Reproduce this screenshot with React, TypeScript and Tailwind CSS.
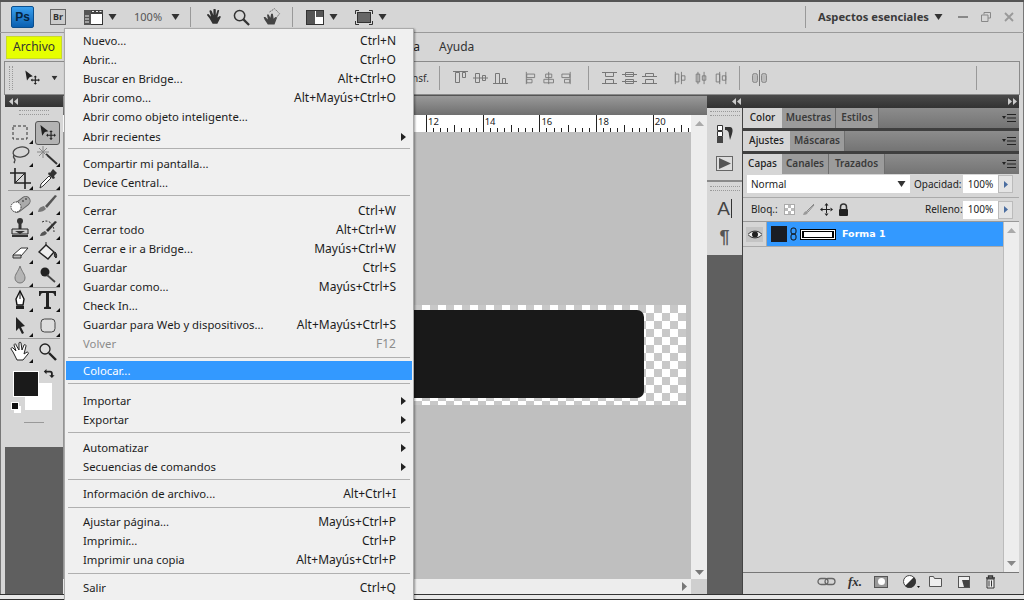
import React from "react";

type Item = { l?: string; s?: string; arrow?: boolean; off?: boolean; on?: boolean; sep?: string; top?: boolean };

const menu: Item[] = [
  { l: "Nuevo...", s: "Ctrl+N" },
  { l: "Abrir...", s: "Ctrl+O" },
  { l: "Buscar en Bridge...", s: "Alt+Ctrl+O" },
  { l: "Abrir como...", s: "Alt+Mayús+Ctrl+O" },
  { l: "Abrir como objeto inteligente..." },
  { l: "Abrir recientes", arrow: true, top: true },
  { sep: "h-[8px] pt-[2px]" },
  { l: "Compartir mi pantalla..." },
  { l: "Device Central..." },
  { sep: "h-[9px] pt-[3px]" },
  { l: "Cerrar", s: "Ctrl+W" },
  { l: "Cerrar todo", s: "Alt+Ctrl+W" },
  { l: "Cerrar e ir a Bridge...", s: "Mayús+Ctrl+W" },
  { l: "Guardar", s: "Ctrl+S" },
  { l: "Guardar como...", s: "Mayús+Ctrl+S" },
  { l: "Check In..." },
  { l: "Guardar para Web y dispositivos...", s: "Alt+Mayús+Ctrl+S" },
  { l: "Volver", s: "F12", off: true },
  { sep: "h-[8px] pt-[4px]" },
  { l: "Colocar...", on: true },
  { sep: "h-[11px] pt-[3px]" },
  { l: "Importar", arrow: true },
  { l: "Exportar", arrow: true },
  { sep: "h-[9px] pt-[3px]" },
  { l: "Automatizar", arrow: true },
  { l: "Secuencias de comandos", arrow: true },
  { sep: "h-[8px] pt-[3px]" },
  { l: "Información de archivo...", s: "Alt+Ctrl+I" },
  { sep: "h-[9px] pt-[4px]" },
  { l: "Ajustar página...", s: "Mayús+Ctrl+P" },
  { l: "Imprimir...", s: "Ctrl+P" },
  { l: "Imprimir una copia", s: "Alt+Mayús+Ctrl+P" },
  { sep: "h-[9px] pt-[4px]" },
  { l: "Salir", s: "Ctrl+Q" },
];

const Caret = ({ c = "" }: { c?: string }) => (
  <svg width="9" height="6" viewBox="0 0 9 6" className={c}>
    <path d="M.5 0h8L4.500 6z" fill="#333" />
  </svg>
);

const Tool = ({ children, corner = true }: { children: React.ReactNode; corner?: boolean }) => (
  <svg width="26" height="24" viewBox="0 0 26 24">
    {children}
    {corner && <path d="M25 19v4h-4z" fill="#111" />}
  </svg>
);

const tools: React.ReactNode[][] = [
  [
    <rect x="5" y="5" width="14" height="13" fill="none" stroke="#333" strokeDasharray="3 2" />,
    <g><path d="M5 3l9 7-4 1-3 4z" fill="#222" /><path d="M17 10v9M12.500 14.500h9" stroke="#222" strokeWidth="1.300" /><path d="M17 9l-2 2h4zM17 20l-2-2h4zM11.500 14.500l2-2v4zM22.500 14.500l-2-2v4z" fill="#222" /></g>,
  ],
  [
    <g fill="none" stroke="#444" strokeWidth="1.300"><ellipse cx="13" cy="8" rx="8" ry="5" transform="rotate(-10 13 8)" /><path d="M6 11c-2 3 1 3 1 5s-2 2 0 3" /></g>,
    <g><path d="M11 10l11 10" stroke="#333" strokeWidth="2" /><path d="M8 2v12M2 8h12M4 4l8 8M12 4l-8 8" stroke="#888" strokeWidth="1" /></g>,
  ],
  [
    <g fill="none" stroke="#222" strokeWidth="1.600"><path d="M7 1v15h16M2 6h15v16" /><path d="M7 16L17 6" strokeWidth="1" /></g>,
    <g><path d="M5 21l1-4 8-8 2 2-8 8z" fill="#fff" stroke="#333" /><path d="M15 6l3-4 4 4-3 3 1 2-2 1-5-5 1-2z" fill="#333" /></g>,
  ],
  [
    <g><rect x="3" y="8" width="20" height="9" rx="4.500" transform="rotate(-38 13 12)" fill="#aaa" stroke="#666" /><circle cx="8" cy="15" r="5" fill="#fff" stroke="#333" strokeDasharray="1.500 1" /><circle cx="15" cy="9" r="1" fill="#555" /><circle cx="18" cy="7" r="1" fill="#555" /></g>,
    <g><path d="M3 20c1-5 3-5 6-6l2 3c-2 2-4 3-8 3z" fill="#777" /><path d="M10 14L20 3l2 1-10 12z" fill="#555" /></g>,
  ],
  [
    <g fill="#333"><circle cx="12" cy="4" r="3" /><rect x="10.500" y="6" width="3" height="6" /><path d="M4 12h16v5H4z" fill="#ccc" stroke="#222" /><path d="M7 14l5 3 5-3z" /><rect x="4" y="18" width="16" height="2" /></g>,
    <g><path d="M5 19c1-4 3-4 5-5l2 2c-1 2-3 3-7 3z" fill="#555" /><path d="M11 13L20 4l2 1-9 10z" fill="#333" /><path d="M7 5c6-3 12 1 12 10" fill="none" stroke="#333" strokeDasharray="2 1.500" /></g>,
  ],
  [
    <g><path d="M5 14l8-7h7l-7 8H6z" fill="#fff" stroke="#333" /><path d="M5 14h8v3H5z" fill="#bbb" stroke="#333" /></g>,
    <g><path d="M4 11l7-7 8 7-6 7z" fill="#eee" stroke="#222" strokeWidth="1.400" /><path d="M11 4V1" stroke="#222" /><path d="M20 11c2 2 2 5 1 6-2-1-2-4-1-6z" fill="#444" stroke="#222" /></g>,
  ],
  [
    <path d="M12 2c2 6 5 8 5 12a5 5 0 0 1-10 0c0-4 3-6 5-12z" fill="#b5b5b5" stroke="#777" />,
    <g><circle cx="10" cy="8" r="4.500" fill="#222" /><path d="M12 11l8 7" stroke="#444" strokeWidth="1.800" /></g>,
  ],
  [
    <g><path d="M12 2l4 8-1 6H9l-1-6z" fill="#fff" stroke="#111" strokeWidth="1.400" /><path d="M12 2v8" stroke="#111" /><rect x="8" y="17" width="8" height="3" fill="#222" /></g>,
    <path d="M4 2h17v5h-1.300c-.5-2-1-3-2.500-3H14v13c0 1 1 1 2 1.300V20H9v-1.700c1-.3 2-.3 2-1.300V4H7.800c-1.500 0-2 1-2.500 3H4z" fill="#222" />,
  ],
  [
    <path d="M8 3l9 9-4 1 3 6-2 1-3-6-3 3z" fill="#222" />,
    <rect x="6" y="5" width="14" height="13" rx="3.500" fill="#ddd" stroke="#444" />,
  ],
  [
    <path d="M5 12L3 9c0-1 1-2 2-1l3 3L6 5c0-1 2-2 2 0l3 5V3c0-1 2-1 2 0l1 7 2-5c1-1 2 0 2 1l-2 8 3-2c1 0 2 1 1 2l-5 6H9z" fill="#fff" stroke="#222" />,
    <g><circle cx="10" cy="9" r="5" fill="#ddd" stroke="#222" strokeWidth="1.300" /><path d="M14 13l7 7" stroke="#222" strokeWidth="2.400" /></g>,
  ],
];

const Grip = () => (
  <div className="h-[5px] mx-auto w-[30px] border-y border-dotted border-[#999]" />
);

const ToolRow = ({ i, h = "h-[24px]" }: { i: number; h?: string }) => (
  <div className={`flex justify-center gap-[1px] items-center ${h}`}>
    {i === 0 ? (
      <>
        <Tool>{tools[i][0]}</Tool>
        <div className="w-[25px] h-[24px] rounded-[3px] border border-[#555] bg-[#b3b3b3] flex items-center justify-center">
          <svg width="24" height="22" viewBox="0 0 26 24">{tools[i][1]}</svg>
        </div>
      </>
    ) : (
      <>
        <Tool>{tools[i][0]}</Tool>
        <Tool corner={i !== 9}>{tools[i][1]}</Tool>
      </>
    )}
  </div>
);

const Line = () => <div className="h-px bg-[#9c9c9c] mx-[3px]" />;

const Arrows = ({ c = "#ccc", left = true }: { c?: string; left?: boolean }) => (
  <svg width="9" height="7" viewBox="0 0 9 7">
    <path d={left ? "M4 0v7L0 3.500zM9 0v7L5 3.500z" : "M0 0v7l4-3.500zM5 0v7l4-3.500z"} fill={c} />
  </svg>
);

const PanelMenu = () => (
  <svg width="14" height="10" viewBox="0 0 14 10">
    <path d="M0 3h4L2 6z" fill="#222" />
    <path d="M5 1.500h9M5 5h9M5 8.500h9" stroke="#222" strokeWidth="1.200" />
  </svg>
);

const Tabs = ({ names }: { names: [string, string][] }) => (
  <div className="flex h-[20px] bg-[linear-gradient(#8c8c8c,#747474)] items-stretch pr-[3px]">
    {names.map(([n, w], i) => (
      <div
        key={n}
        style={{ width: w }}
        className={
          i === 0
            ? "bg-[#d6d6d6] text-[#222] flex items-center justify-center text-[10px] font-medium pb-[2px]"
            : "bg-[#9b9b9b] text-[#3a3a3a] border-r border-[#6f6f6f] flex items-center justify-center text-[10px] font-semibold pb-[2px]"
        }
      >
        {n}
      </div>
    ))}
    <div className="flex-1 flex items-center justify-end">
      <PanelMenu />
    </div>
  </div>
);

const AlignIcon = ({ d, w = 16 }: { d: string; w?: number }) => (
  <svg width={w} height="16" viewBox="0 0 16 16">
    <path d={d} fill="none" stroke="#777" />
  </svg>
);

const alignA = [
  "M0 1.500h15M2.500 2.500h4v10h-4zM9.500 2.500h3v5h-3z",
  "M0 8h15M2.500 3.500h4v9h-4zM9.500 5.500h3v5h-3z",
  "M0 13.500h15M2.500 3.500h4v10h-4zM9.500 8.500h3v5h-3z",
];
const alignB = [
  "M1.500 1v14M2 3.500h9v4H2zM2 9.500h6v4H2z",
  "M6.500 1v14M3 3.500h7v4H3zM1 9.500h11v4H1z",
  "M10.500 1v14M1 3.500h9v4H1zM4 9.500h6v4H4z",
];
const alignC = [
  "M0 2.500h15M0 13.500h15M3.500 2.500h8v4h-8zM3.500 9.500h8v4h-8z",
  "M0 4.500h15M0 11.500h15M3.500 2.500h8v4h-8zM3.500 9.500h8v4h-8z",
  "M0 6.500h15M0 13.500h15M3.500 3.500h8v3h-8zM3.500 9.500h8v4h-8z",
];
const alignD = [
  "M1.500 1v14M8.500 1v14M1.500 3.500h4v9h-4zM8.500 5.500h4v5h-4z",
  "M4.500 1v14M11.500 1v14M2.500 3.500h4v9h-4zM9.500 5.500h4v5h-4z",
  "M6.500 1v14M13.500 1v14M2.500 3.500h4v9h-4zM9.500 5.500h4v5h-4z",
];

export default function App() {
  const marks = [12, 14, 16, 18, 20];
  return (
    <div className="relative w-[1024px] h-[600px] overflow-hidden bg-[#d6d6d6] shadow-[inset_1px_0_0_#777,inset_-1px_0_0_#777] flex flex-col text-[#1c1c1c] font-['Noto_Sans',sans-serif] text-[12px]">
      {/* Application bar */}
      <div className="h-[33px] border-t-2 border-[#555] border-b border-b-[#9a9a9a] flex items-center shrink-0">
        <div className="ml-[11px] w-[23px] h-[22px] rounded-[2px] border border-[#0a4f8f] bg-[linear-gradient(#3aa0ee,#0a5fb0)] flex items-center justify-center font-bold text-[12px] text-[#06243f] font-['Liberation_Sans',sans-serif]">
          Ps
        </div>
        <div className="ml-[16px] w-[16px] h-[16px] border border-[#666] bg-[#ccc] flex items-center justify-center text-[9px] font-bold text-[#333]">
          Br
        </div>
        <svg className="ml-[18px]" width="19" height="15" viewBox="0 0 19 15">
          <rect x=".5" y=".5" width="18" height="14" fill="#fff" stroke="#333" />
          <rect x="0" y="0" width="19" height="4" fill="#444" />
          <rect x="0" y="0" width="7" height="15" fill="#555" />
          <path d="M1 6h4M1 9h4M1 12h4M8 1.500h2M12 1.500h2M15.500 1.500h2" stroke="#eee" />
        </svg>
        <Caret c="ml-[5px]" />
        <span className="ml-[17px] w-[32px] text-[11px] text-[#555]">100%</span>
        <Caret c="ml-[5px]" />
        <div className="ml-[10px] h-[20px] w-px bg-[#999]" />
        <svg className="ml-[14px]" width="20" height="19" viewBox="0 0 24 24">
          <path d="M5 13L2 9c0-1 1-2 2-1l3 3L5 4c0-1 2-2 3 0l2 5V2c0-1 3-1 3 0v7l2-6c1-1 3 0 2 1l-2 8 3-2c1 0 2 1 1 2l-4 8H9z" fill="#333" />
        </svg>
        <svg className="ml-[8px]" width="17" height="17" viewBox="0 0 18 18">
          <circle cx="7" cy="7" r="5.500" fill="none" stroke="#333" strokeWidth="1.600" />
          <path d="M11 11l6 6" stroke="#333" strokeWidth="2.400" />
        </svg>
        <svg className="ml-[12px]" width="20" height="20" viewBox="0 0 24 24">
          <path d="M3 15l-1-3 2 0 3 3-1-6 2 0 2 4 1-5 2 0 1 6 2-2 2 1-3 8H7z" fill="#444" />
          <path d="M9 6l6-4 6 6-6 8" fill="none" stroke="#555" strokeDasharray="2 1" />
        </svg>
        <div className="ml-[10px] h-[20px] w-px bg-[#999]" />
        <svg className="ml-[13px]" width="18" height="15" viewBox="0 0 18 15">
          <rect x=".5" y=".5" width="17" height="14" fill="#fff" stroke="#333" />
          <rect x="1" y="1" width="8" height="13" fill="#555" />
          <rect x="10" y="1" width="7" height="6" fill="#555" />
        </svg>
        <Caret c="ml-[5px]" />
        <svg className="ml-[17px]" width="18" height="15" viewBox="0 0 18 15">
          <path d="M.5 4V.5H4M14 .5h3.500V4M17.500 11v3.500H14M4 14.500H.5V11" fill="none" stroke="#333" />
          <rect x="2.500" y="2.500" width="13" height="10" fill="#666" stroke="#333" />
        </svg>
        <Caret c="ml-[5px]" />
        <div className="ml-[418px] h-[22px] w-px bg-[#999]" />
        <span className="ml-[12px] w-[111px] text-[11.2px] font-bold text-[#3b3b3b] whitespace-nowrap">Aspectos esenciales</span>
        <Caret c="ml-[5px]" />
        <div className="ml-[15px] w-[10px] h-[2px] bg-[#888]" />
        <svg className="ml-[13px]" width="10" height="10" viewBox="0 0 10 10">
          <path d="M3 2.500V.5h6.500V6H7M.5 3h6.500v6.500H.5z" fill="none" stroke="#888" />
        </svg>
        <svg className="ml-[13px]" width="10" height="10" viewBox="0 0 10 10">
          <path d="M1 1l8 8M9 1L1 9" stroke="#999" strokeWidth="1.800" />
        </svg>
      </div>

      {/* Menu bar */}
      <div className="h-[28px] flex items-center shrink-0 pl-[6px]">
        <div className="w-[56px] h-[23px] bg-[#e6ff00] border border-[#c9d92b] flex items-center justify-center text-[12px] text-[#333]">
          Archivo
        </div>
        <div className="w-[358px] flex justify-end whitespace-nowrap">
          <span>Ventana</span>
        </div>
        <span className="ml-[19px] text-[#333]">Ayuda</span>
      </div>

      {/* Options bar */}
      <div className="h-[34px] mx-[4px] border border-[#8a8a8a] flex items-center shrink-0">
        <div className="w-[4px] h-[24px] ml-[4px] border-x border-dotted border-[#999]" />
        <svg className="ml-[8px]" width="22" height="20" viewBox="0 0 26 24">{tools[0][1]}</svg>
        <Caret c="ml-[7px] scale-75" />
        <div className="flex-none w-[381px] text-right pr-[10px] border-r border-[#999] h-[24px] flex items-center justify-end text-[10px] text-[#333] whitespace-nowrap">
          Mostrar controles de transf.
        </div>
        <div className="flex gap-[4px] ml-[13px]">
          {alignA.map((d, i) => <AlignIcon key={i} d={d} />)}
        </div>
        <div className="flex gap-[4px] ml-[16px]">
          {alignB.map((d, i) => <AlignIcon key={i} d={d} w={14} />)}
        </div>
        <div className="ml-[13px] h-[24px] w-px bg-[#999]" />
        <div className="flex gap-[4px] ml-[13px]">
          {alignC.map((d, i) => <AlignIcon key={i} d={d} />)}
        </div>
        <div className="flex gap-[6px] ml-[16px]">
          {alignD.map((d, i) => <AlignIcon key={i} d={d} w={14} />)}
        </div>
        <div className="ml-[11px] h-[24px] w-px bg-[#999]" />
        <svg className="ml-[11px]" width="17" height="16" viewBox="0 0 17 16">
          <path d="M8.500 0v16" stroke="#777" />
          <rect x="1.500" y="3.500" width="5" height="9" rx="2" fill="#bbb" stroke="#888" />
          <rect x="10.500" y="3.500" width="5" height="9" rx="2" fill="#bbb" stroke="#888" />
        </svg>
        <div className="ml-[208px] h-[24px] w-px bg-[#999]" />
      </div>

      {/* Workspace */}
      <div className="flex h-[499px] shrink-0 pl-[5px] pr-[5px]">
        {/* Tools */}
        <div className="w-[58px] flex flex-col bg-[#5f5f5f]">
          <div className="h-[12px] bg-[linear-gradient(#4a4a4a,#333)] flex items-center pl-[4px]">
            <Arrows />
          </div>
          <div className="h-[340px] bg-[#d6d6d6] flex flex-col pt-[3px]">
            <Grip />
            <div className="h-[6px]" />
            <ToolRow i={0} h="h-[23px]" />
            <ToolRow i={1} h="h-[23px]" />
            <ToolRow i={2} h="h-[23px]" />
            <Line />
            <ToolRow i={3} h="h-[26px]" />
            <ToolRow i={4} />
            <ToolRow i={5} />
            <ToolRow i={6} h="h-[22px]" />
            <Line />
            <ToolRow i={7} h="h-[26px]" />
            <ToolRow i={8} />
            <Line />
            <ToolRow i={9} h="h-[26px]" />
            <div className="relative h-[57px]">
              <div className="absolute left-[20px] top-[18px] w-[27px] h-[27px] bg-white" />
              <div className="absolute left-[8px] top-[6px] w-[26px] h-[26px] bg-[#1a1a1a] border border-white" />
              <svg className="absolute left-[37px] top-[3px]" width="13" height="12" viewBox="0 0 13 12">
                <path d="M2 4l3-3v2h4c2 0 3 1 3 3v2h2l-3 3-3-3h2V6c0-.6-.4-1-1-1H5v2z" fill="#222" transform="scale(.9)" />
              </svg>
              <div className="absolute left-[9px] top-[41px] w-[7px] h-[7px] bg-white border border-white" />
              <div className="absolute left-[6px] top-[37px] w-[8px] h-[8px] bg-[#111] border border-white" />
            </div>
            <div className="h-px mx-[19px] bg-[#999]" />
          </div>
        </div>

        {/* Document */}
        <div className="w-[644px] flex flex-col">
          <div className="h-[20px] bg-[linear-gradient(#999,#6f6f6f)] border-t border-[#555] shrink-0" />
          <div className="flex flex-1 min-h-0">
            <div className="w-[628px] flex flex-col">
              <svg className="shrink-0 bg-white" width="628" height="17" viewBox="63 0 628 17">
                {marks.map((m) => {
                  const x = 426 + (m - 12) * 28.35;
                  return (
                    <g key={m}>
                      <path d={`M${Math.round(x)}.5 0v17`} stroke="#222" />
                      <text x={x + 2} y="10" fontSize="9.500" fill="#222" fontFamily="Noto Sans">{m}</text>
                      {[1, 2, 3, 4, 5, 6, 7].map((k) => (
                        <path key={k} d={`M${Math.round(x + k * 7.09)}.5 ${k === 4 ? 10 : 13}V17`} stroke="#222" />
                      ))}
                    </g>
                  );
                })}
              </svg>
              <div className="flex-1 bg-[#bfbfbf] pl-[38px] pt-[173px] border-l border-[#999]">
                <div className="w-[584px] h-[100px] pt-[5px] pr-[42px] bg-[conic-gradient(#c8c8c8_25%,#ffffff_0_50%,#c8c8c8_0_75%,#ffffff_0)] bg-[length:16px_16px]">
                  <div className="h-[88px] ml-[7px] bg-[#191919] rounded-[7px]" />
                </div>
              </div>
              <div className="h-[15px] bg-[#ededed] flex items-center justify-end pr-[4px] shrink-0">
                <svg width="5" height="9" viewBox="0 0 5 9"><path d="M0 0l5 4.500L0 9z" fill="#777" /></svg>
              </div>
            </div>
            <div className="w-[16px] flex flex-col bg-[#ededed]">
              <div className="h-[17px] flex items-center justify-center">
                <svg width="9" height="5" viewBox="0 0 9 5"><path d="M0 5l4.500-5L9 5z" fill="#aaa" /></svg>
              </div>
              <div className="flex-1 flex items-end justify-center pb-[4px]">
                <svg width="9" height="5" viewBox="0 0 9 5"><path d="M0 0l4.500 5L9 0z" fill="#777" /></svg>
              </div>
              <div className="h-[15px] bg-[#cfcfcf]" />
            </div>
          </div>
        </div>

        {/* Right dock */}
        <div className="w-[312px] flex flex-col">
          <div className="h-[13px] bg-[linear-gradient(#4a4a4a,#333)] flex items-center shrink-0">
            <div className="w-[36px] flex justify-end pr-[2px]"><Arrows /></div>
            <div className="flex-1 flex justify-end pr-[2px]"><Arrows left={false} /></div>
          </div>
          <div className="flex flex-1 min-h-0">
            <div className="w-[36px] bg-[#5f5f5f] flex flex-col border-r border-[#444]">
              <div className="h-[72px] bg-[#d6d6d6] flex flex-col items-center pt-[3px]">
                <Grip />
                <svg className="mt-[8px]" width="18" height="19" viewBox="0 0 18 19">
                  <path d="M1.500 1.500h5v5h-5zM1.500 7.500h5v5h-5z" fill="#fff" stroke="#333" />
                  <rect x="1" y="13" width="6" height="6" fill="#444" />
                  <path d="M9 3h5c3 0 3 4 2 7l-2 6-1-5c0-3-1-5-4-5z" fill="#333" />
                </svg>
                <div className="mt-[13px] w-[17px] h-[15px] border border-[#666] bg-[#ddd] flex items-center justify-center">
                  <svg width="13" height="11" viewBox="0 0 13 11"><path d="M1 0l12 5.500L1 11z" fill="#555" /></svg>
                </div>
              </div>
              <div className="h-[2px] bg-[#8a8a8a]" />
              <div className="h-[73px] bg-[#d6d6d6] flex flex-col items-center pt-[4px]">
                <Grip />
                <span className="mt-[8px] text-[19px] leading-[24px] text-[#444] font-['Liberation_Sans',sans-serif] border-r border-[#333] pr-[1px] h-[19px] flex items-center">A</span>
                <span className="mt-[9px] text-[18px] leading-[20px] font-bold text-[#555] font-['Liberation_Sans',sans-serif]">¶</span>
              </div>
            </div>

            <div className="flex-1 flex flex-col min-w-0">
              <Tabs names={[["Color", "39px"], ["Muestras", "54px"], ["Estilos", "43px"]]} />
              <div className="h-[3px] bg-[#3f3f3f]" />
              <Tabs names={[["Ajustes", "47px"], ["Máscaras", "55px"]]} />
              <div className="h-[3px] bg-[#3f3f3f]" />
              <Tabs names={[["Capas", "39px"], ["Canales", "47px"], ["Trazados", "56px"]]} />
              <div className="flex-1 bg-[#d6d6d6] flex flex-col min-h-0">
                <div className="h-[24px] flex items-start pt-[1px] pl-[4px] border-b border-[#aaa] text-[10px] shrink-0">
                  <div className="w-[163px] h-[18px] bg-white flex items-center justify-between px-[4px]">
                    <span>Normal</span>
                    <Caret />
                  </div>
                  <span className="ml-[4px] w-[46px] h-[18px] flex items-center whitespace-nowrap">Opacidad:</span>
                  <div className="ml-[3px] w-[35px] h-[18px] bg-white flex items-center justify-center">100%</div>
                  <div className="w-[15px] h-[18px] bg-[#e4e4e4] border border-[#bbb] flex items-center justify-center">
                    <svg width="4" height="7" viewBox="0 0 4 7"><path d="M0 0l4 3.500L0 7z" fill="#4a6da0" /></svg>
                  </div>
                </div>
                <div className="h-[24px] flex items-center pl-[8px] border-b border-[#999] text-[10px] shrink-0">
                  <span className="w-[32px]">Bloq.:</span>
                  <div className="ml-[1px] w-[11px] h-[11px] border border-[#aaa] bg-[conic-gradient(#bbb_25%,#fff_0_50%,#bbb_0_75%,#fff_0)] bg-[length:6px_6px]" />
                  <svg className="ml-[7px]" width="13" height="13" viewBox="0 0 13 13">
                    <path d="M1 12c1-3 2-4 4-4l1 1c0 2-2 3-5 3z" fill="#999" />
                    <path d="M5 8l7-7M6 9l6-7" stroke="#888" />
                  </svg>
                  <svg className="ml-[5px]" width="13" height="13" viewBox="0 0 13 13">
                    <path d="M6.500 0l2 2.500h-4zM6.500 13l2-2.500h-4zM0 6.500l2.500-2v4zM13 6.500l-2.500-2v4zM6 2h1v9H6zM2 6h9v1H2z" fill="#222" />
                  </svg>
                  <svg className="ml-[5px]" width="11" height="13" viewBox="0 0 11 13">
                    <path d="M2.500 6V4a3 3 0 0 1 6 0v2" fill="none" stroke="#333" strokeWidth="1.500" />
                    <rect x="1" y="6" width="9" height="7" rx="1" fill="#222" />
                  </svg>
                  <span className="ml-[76px] w-[35px] whitespace-nowrap">Relleno:</span>
                  <div className="ml-[3px] w-[35px] h-[18px] bg-white flex items-center justify-center">100%</div>
                  <div className="w-[15px] h-[18px] bg-[#e4e4e4] border border-[#bbb] flex items-center justify-center">
                    <svg width="4" height="7" viewBox="0 0 4 7"><path d="M0 0l4 3.500L0 7z" fill="#4a6da0" /></svg>
                  </div>
                </div>
                <div className="flex-1 flex min-h-0 border-b border-[#777]">
                  <div className="flex-1">
                    <div className="h-[25px] flex border-b border-[#aaa]">
                      <div className="w-[24px] flex items-center justify-center border-r border-[#aaa]">
                        <div className="w-[17px] h-[15px] bg-[#c4c4c4] flex items-center justify-center">
                          <svg width="14" height="9" viewBox="0 0 14 9">
                            <path d="M0 4.500C3 0 11 0 14 4.500 11 9 3 9 0 4.500z" fill="#eee" stroke="#333" />
                            <circle cx="7" cy="4.500" r="3" fill="#222" />
                          </svg>
                        </div>
                      </div>
                      <div className="flex-1 bg-[#3399ff] flex items-center pl-[4px]">
                        <div className="w-[16px] h-[16px] bg-[#1a1d24]" />
                        <svg className="ml-[3px]" width="7" height="14" viewBox="0 0 7 14">
                          <rect x="1" y="1" width="5" height="6" rx="2" fill="none" stroke="#111" />
                          <rect x="1" y="7" width="5" height="6" rx="2" fill="none" stroke="#111" />
                        </svg>
                        <div className="ml-[3px] w-[36px] h-[11px] bg-white border border-black flex items-center px-[1px]">
                          <div className="w-full h-[7px] bg-black p-[1px] flex">
                            <div className="flex-1 mx-[1px] bg-white" />
                          </div>
                        </div>
                        <span className="ml-[6px] text-[9.5px] font-bold text-white font-['DejaVu_Sans',sans-serif]">Forma 1</span>
                      </div>
                    </div>
                  </div>
                  <div className="w-[16px] bg-[#ededed] flex flex-col justify-between items-center py-[6px] border-l border-[#bbb]">
                    <svg width="9" height="5" viewBox="0 0 9 5"><path d="M0 5l4.500-5L9 5z" fill="#aaa" /></svg>
                    <svg width="9" height="5" viewBox="0 0 9 5"><path d="M0 0l4.500 5L9 0z" fill="#888" /></svg>
                  </div>
                </div>
                <div className="h-[21px] flex items-center shrink-0 pl-[74px] pb-[4px]">
                  <svg width="19" height="9" viewBox="0 0 19 9">
                    <rect x="1" y="1.500" width="10" height="6" rx="3" fill="none" stroke="#666" strokeWidth="1.300" />
                    <rect x="8" y="1.500" width="10" height="6" rx="3" fill="none" stroke="#666" strokeWidth="1.300" />
                  </svg>
                  <span className="ml-[12px] w-[18px] text-[13px] leading-[14px] font-bold italic text-[#333] font-['Liberation_Serif',serif]">fx.</span>
                  <div className="ml-[8px] w-[14px] h-[12px] bg-[#999] border border-[#555] flex items-center justify-center">
                    <div className="w-[7px] h-[7px] rounded-full bg-white" />
                  </div>
                  <svg className="ml-[15px]" width="17" height="13" viewBox="0 0 17 13">
                    <circle cx="6.500" cy="6.500" r="6" fill="#fff" stroke="#444" />
                    <path d="M11 2L2 11a6 6 0 0 0 9-9z" fill="#333" />
                    <path d="M14 11h3l-1.500 2z" fill="#111" />
                  </svg>
                  <svg className="ml-[9px]" width="13" height="11" viewBox="0 0 13 11">
                    <path d="M.5 10.500v-10h4l1 2h7v8z" fill="#eee" stroke="#555" />
                  </svg>
                  <svg className="ml-[16px]" width="12" height="12" viewBox="0 0 12 12">
                    <rect x=".5" y=".5" width="11" height="11" fill="#eee" stroke="#555" />
                    <path d="M4 4h7v7H6z" fill="#444" />
                  </svg>
                  <svg className="ml-[15px]" width="11" height="14" viewBox="0 0 11 14">
                    <path d="M1 3h9M3.500 3V1h4v2" fill="none" stroke="#333" strokeWidth="1.300" />
                    <path d="M2 4h7v9H2z" fill="#eee" stroke="#333" />
                    <path d="M4 5.500v6M6.500 5.500v6" stroke="#333" />
                  </svg>
                </div>
              </div>
            </div>
          </div>
        </div>
      </div>

      {/* Bottom edge */}
      <div className="h-[6px] shrink-0 border-t border-b border-[#333] bg-[#e8e8e8]" />

      {/* Open File menu */}
      <div className="absolute left-[64px] top-[28px] w-[350px] h-[572px] bg-[#f0f0f0] border-l border-r border-t border-[#aaa] shadow-[1px_1px_2px_rgba(0,0,0,0.4)] pt-[2px] px-[1px] leading-[19px]">
        {menu.map((it, i) =>
          it.sep ? (
            <div key={i} className={it.sep + " px-[2px]"}>
              <div className="h-px bg-[#b0b0b0]" />
            </div>
          ) : (
            <div
              key={i}
              className={
                "h-[19px] flex items-center pl-[17px] pr-[16px] whitespace-nowrap " +
                (it.top ? "mt-[1px] " : "") +
                (it.on ? "bg-[#3399ff] text-white " : it.off ? "text-[#8c8c8c] " : "text-[#1c1c1c] ")
              }
            >
              <span className="flex-1 text-[11.3px]">{it.l}</span>
              {it.s && <span className="text-[12px]">{it.s}</span>}
              {it.arrow && (
                <svg className="-mr-[10px]" width="5" height="8" viewBox="0 0 5 8">
                  <path d="M0 0l5 4-5 4z" fill="#222" />
                </svg>
              )}
            </div>
          )
        )}
      </div>
    </div>
  );
}
